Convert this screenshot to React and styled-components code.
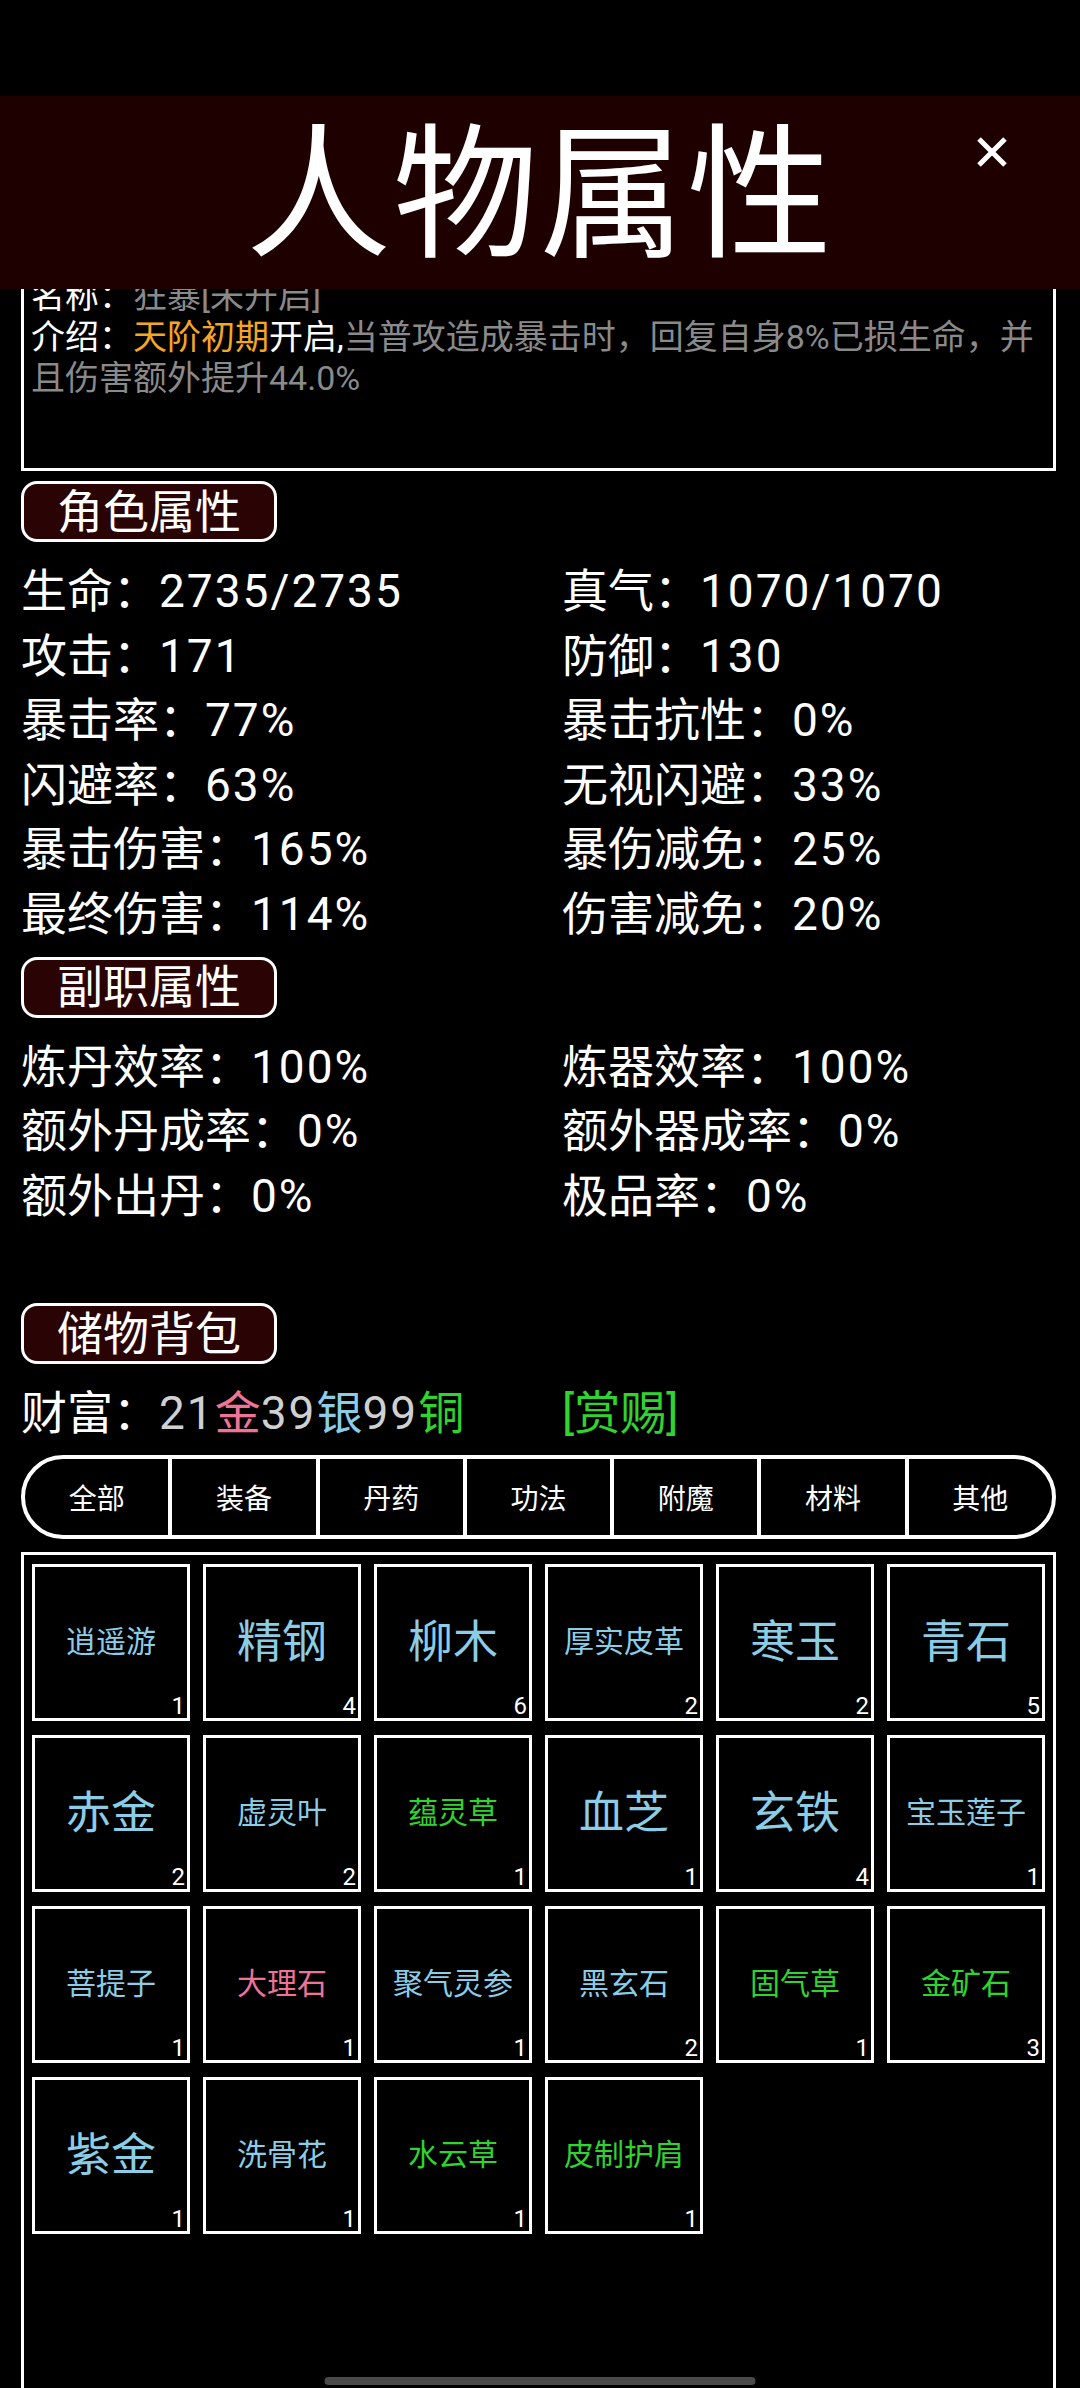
import styled, { createGlobalStyle } from "styled-components"

const GlobalStyle = createGlobalStyle`
  html, body {
    margin: 0;
    padding: 0;
    background: #000;
    color: #fff;
    font-family: Roboto, "Noto Sans CJK SC", "Noto Sans", sans-serif;
  }
  * { box-sizing: border-box; }
`

const BLUE = "#8bcde6"
const GREEN = "#2fd42f"
const PINK = "#ef7396"
const SILVER = "#d0d0d0"

const mainStats = [
  ["生命", "2735/2735"], ["真气", "1070/1070"],
  ["攻击", "171"], ["防御", "130"],
  ["暴击率", "77%"], ["暴击抗性", "0%"],
  ["闪避率", "63%"], ["无视闪避", "33%"],
  ["暴击伤害", "165%"], ["暴伤减免", "25%"],
  ["最终伤害", "114%"], ["伤害减免", "20%"],
]

const jobStats = [
  ["炼丹效率", "100%"], ["炼器效率", "100%"],
  ["额外丹成率", "0%"], ["额外器成率", "0%"],
  ["额外出丹", "0%"], ["极品率", "0%"],
]

const tabs = ["全部", "装备", "丹药", "功法", "附魔", "材料", "其他"]

const items = [
  ["逍遥游", BLUE, 1], ["精钢", BLUE, 4], ["柳木", BLUE, 6], ["厚实皮革", BLUE, 2], ["寒玉", BLUE, 2], ["青石", BLUE, 5],
  ["赤金", BLUE, 2], ["虚灵叶", BLUE, 2], ["蕴灵草", GREEN, 1], ["血芝", BLUE, 1], ["玄铁", BLUE, 4], ["宝玉莲子", BLUE, 1],
  ["菩提子", BLUE, 1], ["大理石", PINK, 1], ["聚气灵参", BLUE, 1], ["黑玄石", BLUE, 2], ["固气草", GREEN, 1], ["金矿石", GREEN, 3],
  ["紫金", BLUE, 1], ["洗骨花", BLUE, 1], ["水云草", GREEN, 1], ["皮制护肩", GREEN, 1],
]

const App = () => {
  return (
    <>
      <GlobalStyle />
      <Header>
        <Title>人物属性</Title>
        <Close>
          <svg width="34" height="34" viewBox="0 0 34 34">
            <path d="M4 4 L30 30 M30 4 L4 30" stroke="#fff" strokeWidth="5" strokeLinecap="butt" />
          </svg>
        </Close>
      </Header>

      <Page>
        <IntroBox>
          <div><White>名称：</White>狂暴[未开启]</div>
          <div>
            <White>介绍：</White><Orange>天阶初期</Orange><White>开启,</White>当普攻造成暴击时，回复自身8%已损生命，并且伤害额外提升44.0%
          </div>
        </IntroBox>

        <SectionTag>角色属性</SectionTag>
        <StatGrid>
          {mainStats.map(([k, v]) => <Stat key={k}>{k}：<Num>{v}</Num></Stat>)}
        </StatGrid>

        <SectionTag>副职属性</SectionTag>
        <StatGrid>
          {jobStats.map(([k, v]) => <Stat key={k}>{k}：<Num>{v}</Num></Stat>)}
        </StatGrid>

        <SectionTag $gap>储物背包</SectionTag>
        <StatGrid>
          <Stat>
            财富：<Num $c={SILVER}>21</Num><Coin $c={PINK}>金</Coin>
            <Num $c={SILVER}>39</Num><Coin $c={BLUE}>银</Coin>
            <Num $c={SILVER}>99</Num><Coin $c={GREEN}>铜</Coin>
          </Stat>
          <Stat><Coin $c={GREEN}>[赏赐]</Coin></Stat>
        </StatGrid>

        <TabBar>
          {tabs.map((t) => <Tab key={t}>{t}</Tab>)}
        </TabBar>

        <ItemPanel>
          {items.map(([name, color, n]) => (
            <Cell key={name}>
              <ItemName $color={color} $big={name.length <= 2}>{name}</ItemName>
              <Count>{n}</Count>
            </Cell>
          ))}
        </ItemPanel>
      </Page>

      <HomeBar />
    </>
  )
}

const Header = styled.div`
  position: fixed;
  top: 96px;
  left: 0;
  right: 0;
  height: 193px;
  background: #1f0000;
  display: flex;
  align-items: center;
  justify-content: center;
  z-index: 5;
`

const Title = styled.div`
  font-size: 145px;
  line-height: 1;
  padding-top: 8px;
  letter-spacing: 2px;
  color: #fff;
`

const Close = styled.div`
  position: absolute;
  right: 71px;
  top: 39px;
  width: 34px;
  height: 34px;
  display: flex;
`

const Page = styled.div`
  padding: 269px 24px 0 21px;
  height: 2388px;
  overflow: hidden;
`

const IntroBox = styled.div`
  height: 202px;
  border: 3px solid #fff;
  padding: 4px 0 0 7px;
  font-size: 34px;
  line-height: 41px;
  color: #8a8a8a;
`

const White = styled.span`
  color: #fff;
`

const Orange = styled.span`
  color: #f5a623;
`

const SectionTag = styled.div`
  display: inline-flex;
  align-items: center;
  height: 61px;
  margin-top: ${(p) => (p.$gap ? "75px" : "10px")};
  padding: 0 33px;
  border: 3px solid #fff;
  border-radius: 16px;
  background: #2a0404;
  font-size: 46px;
  line-height: 1;
`

const StatGrid = styled.div`
  display: grid;
  grid-template-columns: 541px 1fr;
  margin-top: 17px;
  font-size: 46px;
  line-height: 64.6px;
`

const Stat = styled.div`
  white-space: nowrap;
  color: #fff;
`

const Num = styled.span`
  letter-spacing: 2px;
  color: ${(p) => p.$c || "#fff"};
`

const Coin = styled.span`
  color: ${(p) => p.$c};
`

const TabBar = styled.div`
  display: flex;
  height: 84px;
  margin-top: 9px;
  border: 4px solid #fff;
  border-radius: 42px;
  overflow: hidden;
`

const Tab = styled.div`
  flex: 1;
  display: flex;
  align-items: center;
  justify-content: center;
  font-size: 28px;
  color: #fff;
  & + & {
    border-left: 4px solid #fff;
  }
`

const ItemPanel = styled.div`
  height: 860px;
  margin-top: 13px;
  border: 3px solid #fff;
  border-bottom: none;
  padding: 9px 8px;
  display: grid;
  grid-template-columns: repeat(6, 158px);
  grid-auto-rows: 157px;
  column-gap: 13px;
  row-gap: 14px;
  align-content: start;
`

const Cell = styled.div`
  position: relative;
  border: 3px solid #fff;
  display: flex;
  align-items: center;
  justify-content: center;
`

const ItemName = styled.div`
  color: ${(p) => p.$color};
  font-size: ${(p) => (p.$big ? "45px" : "30px")};
  line-height: 1;
  white-space: nowrap;
`

const Count = styled.div`
  position: absolute;
  right: 2px;
  bottom: 0;
  font-size: 24px;
  line-height: 1;
  color: #fff;
`

const HomeBar = styled.div`
  position: fixed;
  bottom: 3px;
  left: 50%;
  transform: translateX(-50%);
  width: 431px;
  height: 8px;
  border-radius: 4px;
  background: #4a4a4a;
`

export default App
